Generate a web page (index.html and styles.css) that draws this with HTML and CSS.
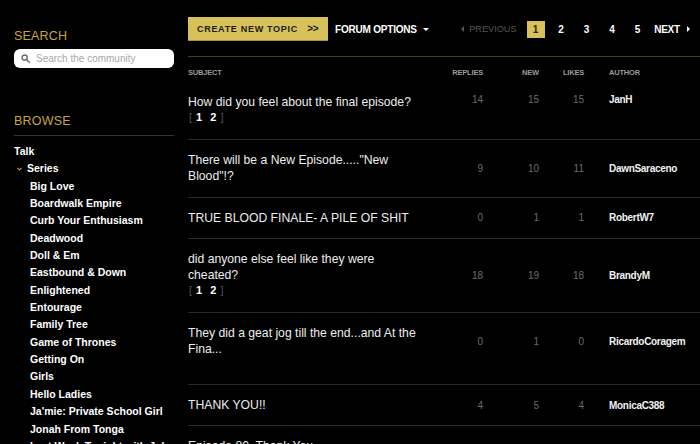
FILE: index.html
```html
<!DOCTYPE html>
<html>
<head>
<meta charset="utf-8">
<link rel="stylesheet" href="styles.css">
</head>
<body>
<div class="page">
  <aside class="sidebar">
    <h2 class="side-title">SEARCH</h2>
    <div class="search">
      <svg class="search-icon" width="9" height="9" viewBox="0 0 9 9"><circle cx="3.6" cy="3.6" r="2.6" fill="none" stroke="#6a6a6a" stroke-width="1.4"/><line x1="5.5" y1="5.5" x2="8.2" y2="8.2" stroke="#6a6a6a" stroke-width="1.6" stroke-linecap="round"/></svg>
      <span class="placeholder">Search the community</span>
    </div>
    <h2 class="side-title browse">BROWSE</h2>
    <ul class="nav">
      <li class="nav-top">Talk</li>
      <li class="nav-top nav-open"><svg class="chev" width="5" height="4" viewBox="0 0 5 4"><path d="M0.5 0.8 L2.5 3 L4.5 0.8" fill="none" stroke="#c9a63c" stroke-width="1.1"/></svg>Series</li>
      <li class="nav-sub">Big Love</li>
      <li class="nav-sub">Boardwalk Empire</li>
      <li class="nav-sub">Curb Your Enthusiasm</li>
      <li class="nav-sub">Deadwood</li>
      <li class="nav-sub">Doll &amp; Em</li>
      <li class="nav-sub">Eastbound &amp; Down</li>
      <li class="nav-sub">Enlightened</li>
      <li class="nav-sub">Entourage</li>
      <li class="nav-sub">Family Tree</li>
      <li class="nav-sub">Game of Thrones</li>
      <li class="nav-sub">Getting On</li>
      <li class="nav-sub">Girls</li>
      <li class="nav-sub">Hello Ladies</li>
      <li class="nav-sub">Ja'mie: Private School Girl</li>
      <li class="nav-sub">Jonah From Tonga</li>
      <li class="nav-sub">Last Week Tonight with John</li>
    </ul>
  </aside>
  <main class="main">
    <div class="toolbar">
      <div class="create-btn"><span>CREATE NEW TOPIC</span><span class="arrows">&gt;&gt;</span></div>
      <div class="forum-options">FORUM OPTIONS <span class="caret"></span></div>
      <div class="pager">
        <span class="prev"><span class="tri-left"></span>PREVIOUS</span>
        <span class="pg active">1</span>
        <span class="pg">2</span>
        <span class="pg">3</span>
        <span class="pg">4</span>
        <span class="pg">5</span>
        <span class="next">NEXT<span class="tri-right"></span></span>
      </div>
    </div>
    <div class="thead">
      <div>SUBJECT</div>
      <div class="num">REPLIES</div>
      <div class="num">NEW</div>
      <div class="num">LIKES</div>
      <div class="author">AUTHOR</div>
    </div>
    <div class="row row-top">
      <div class="subject">How did you feel about the final episode?<div class="mini-pager"><span class="br">[</span> 1 &nbsp;2 <span class="br">]</span></div></div>
      <div class="num">14</div><div class="num">15</div><div class="num">15</div><div class="author">JanH</div>
    </div>
    <div class="row">
      <div class="subject">There will be a New Episode....."New Blood"!?</div>
      <div class="num">9</div><div class="num">10</div><div class="num">11</div><div class="author">DawnSaraceno</div>
    </div>
    <div class="row">
      <div class="subject">TRUE BLOOD FINALE- A PILE OF SHIT</div>
      <div class="num">0</div><div class="num">1</div><div class="num">1</div><div class="author">RobertW7</div>
    </div>
    <div class="row">
      <div class="subject">did anyone else feel like they were cheated?<div class="mini-pager"><span class="br">[</span> 1 &nbsp;2 <span class="br">]</span></div></div>
      <div class="num">18</div><div class="num">19</div><div class="num">18</div><div class="author">BrandyM</div>
    </div>
    <div class="row row-tall">
      <div class="subject">They did a geat jog till the end...and At the Fina...</div>
      <div class="num">0</div><div class="num">1</div><div class="num">0</div><div class="author">RicardoCoragem</div>
    </div>
    <div class="row">
      <div class="subject">THANK YOU!!</div>
      <div class="num">4</div><div class="num">5</div><div class="num">4</div><div class="author">MonicaC388</div>
    </div>
    <div class="row">
      <div class="subject">Episode 80, Thank You</div>
      <div class="num"></div><div class="num"></div><div class="num"></div><div class="author"></div>
    </div>
  </main>
</div>
</body>
</html>
```
FILE: styles.css
```css
html, body {
  margin: 0;
  padding: 0;
  background: #000;
  overflow: hidden;
  height: 444px;
}
body {
  font-family: "Liberation Sans", Arial, sans-serif;
  color: #fff;
}
.page {
  display: flex;
  padding-left: 14px;
  gap: 14px;
}
.sidebar {
  width: 160px;
  flex: none;
  padding-top: 28px;
}
.side-title {
  margin: 0;
  font-size: 12.5px;
  font-weight: normal;
  color: #c9a63c;
  line-height: 16px;
  letter-spacing: 0.2px;
}
.search {
  margin-top: 5px;
  height: 19px;
  background: #fff;
  border-radius: 6px;
  display: flex;
  align-items: center;
  padding-left: 7px;
  gap: 6px;
}
.search-icon { flex: none; }
.placeholder {
  font-size: 10px;
  color: #a8a8a8;
}
.browse {
  margin-top: 45px;
  padding-bottom: 6px;
  border-bottom: 1px solid #333;
}
.nav {
  list-style: none;
  margin: 7px 0 0;
  padding: 0;
  font-size: 10.5px;
  font-weight: bold;
  line-height: 17.35px;
  white-space: nowrap;
}
.nav-open { display: flex; align-items: center; padding-left: 3px; gap: 5px; }
.nav-sub { padding-left: 16px; }
.main {
  flex: 1;
  padding-top: 17px;
}
.toolbar {
  display: flex;
  align-items: center;
  padding-bottom: 15px;
  padding-right: 10px;
  border-bottom: 1px solid #4a3d18;
}
.create-btn {
  width: 140px;
  height: 24px;
  flex: none;
  box-sizing: border-box;
  background: #d6c15a;
  border-bottom: 1px solid #a8943c;
  color: #1d1a10;
  font-size: 9px;
  font-weight: bold;
  letter-spacing: 0.7px;
  white-space: nowrap;
  display: flex;
  align-items: center;
  padding-left: 9px;
}
.arrows {
  margin-left: auto;
  margin-right: 10px;
  letter-spacing: -0.5px;
  font-size: 10px;
}
.forum-options {
  margin-left: 7px;
  font-size: 10px;
  font-weight: bold;
  letter-spacing: -0.2px;
  white-space: nowrap;
  display: flex;
  align-items: center;
  gap: 4px;
}
.caret {
  width: 0; height: 0;
  border-left: 3px solid transparent;
  border-right: 3px solid transparent;
  border-top: 3px solid #fff;
  margin-left: 2px;
}
.pager {
  margin-left: auto;
  display: flex;
  align-items: center;
  font-size: 10px;
  font-weight: bold;
}
.prev {
  color: #555;
  font-weight: normal;
  font-size: 9.2px;
  display: flex;
  align-items: center;
  gap: 5px;
  margin-right: 10px;
}
.tri-left {
  width: 0; height: 0;
  border-top: 3px solid transparent;
  border-bottom: 3px solid transparent;
  border-right: 3px solid #555;
}
.tri-right {
  width: 0; height: 0;
  border-top: 3px solid transparent;
  border-bottom: 3px solid transparent;
  border-left: 3px solid #fff;
  margin-left: 7px;
}
.pg {
  width: 18px;
  height: 17px;
  display: flex;
  align-items: center;
  justify-content: center;
  margin-right: 7.5px;
}
.pg.active {
  background: #d6c15a;
  color: #2a2412;
}
.next {
  display: flex;
  align-items: center;
  letter-spacing: -0.2px;
}
.thead, .row {
  display: grid;
  grid-template-columns: 235px 60px 56px 45px 116px;
  align-items: center;
}
.thead {
  font-size: 7.5px;
  font-weight: bold;
  color: #9a9a9a;
  letter-spacing: -0.2px;
  line-height: 10px;
  padding: 11px 0 4px;
}
.num { text-align: right; }
.author { padding-left: 25px; }
.row {
  border-bottom: 1px solid #2a2a2a;
  padding: 12px 0 12.3px;
}
.row-top { align-items: start; }
.row-tall { padding-bottom: 27px; }
.subject {
  font-size: 12.2px;
  line-height: 16px;
  color: #ededed;
  padding-right: 4px;
}
.mini-pager {
  font-size: 11px;
  font-weight: bold;
  line-height: 14px;
  margin-bottom: 3px;
  color: #fff;
  padding-left: 1px;
  word-spacing: 1px;
}
.br { color: #555; font-weight: normal; }
.row .num {
  font-size: 10px;
  color: #6c6c6c;
}
.row .author {
  font-size: 10px;
  font-weight: bold;
  color: #f2f2f2;
  letter-spacing: -0.3px;
}
```
